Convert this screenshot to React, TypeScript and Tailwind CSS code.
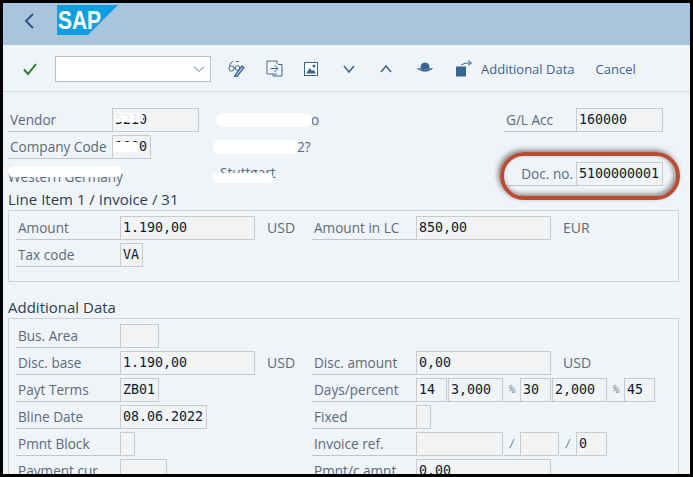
import type { ReactNode } from "react";

const SANS = "font-['Open_Sans','Noto_Sans',sans-serif]";

// SAP style form: label with underline + boxed field
function Label({ w, children, right }: { w: string; children?: ReactNode; right?: boolean }) {
  return (
    <div className={`${w} h-6 shrink-0 border-b border-[#bfc5cb] text-[13.6px] leading-[23px] text-[#5c6b7a] whitespace-nowrap overflow-hidden ${right ? "text-right pr-[3px]" : "pl-[2px]"}`}>
      {children}
    </div>
  );
}

function Unit({ children }: { children: ReactNode }) {
  return (
    <div className="ml-[1px] h-6 w-4 shrink-0 border-b border-[#bfc5cb] text-center font-['DejaVu_Sans_Mono',monospace] text-[11px] leading-[23px] text-[#6f8296]">
      {children}
    </div>
  );
}

function Field({ w, children }: { w: string; children?: ReactNode }) {
  return (
    <div className={`${w} relative h-6 shrink-0 border border-[#c9cccf] bg-[#f2f3f4] pl-[2px] font-['DejaVu_Sans_Mono',monospace] text-[13.3px] leading-[22px] text-[#10202f] whitespace-nowrap overflow-hidden`}>
      {children}
    </div>
  );
}

function Row({ children, className = "" }: { children: ReactNode; className?: string }) {
  return <div className={`flex h-[27px] items-start ${className}`}>{children}</div>;
}

// left half of a two column form row
function Left({ children }: { children: ReactNode }) {
  return <div className="flex w-[296px] shrink-0 items-start">{children}</div>;
}

function Plain({ className = "", children }: { className?: string; children: ReactNode }) {
  return <span className={`text-[14px] leading-6 text-[#5c6b7a] whitespace-nowrap ${className}`}>{children}</span>;
}

// greyed address text, painted over with white in the original
function Blotted({ className = "", bar, children }: { className?: string; bar: string; children?: ReactNode }) {
  return (
    <span className={`relative block h-6 whitespace-nowrap text-[13.6px] leading-6 text-[#5c6b7a] ${className}`}>
      {children}
      <span className={`absolute rounded-full bg-white blur-[0.6px] ${bar}`} />
    </span>
  );
}

function SapLogo() {
  return (
    <svg width="61" height="30" viewBox="0 0 61 30" className="block">
      <polygon points="0,0 61,0 31,30 0,30" fill="#0f9fe0" />
      <text x="1" y="23.5" fontFamily="Liberation Sans" fontWeight="700" fontSize="25" fill="#fff" textLength="43" lengthAdjust="spacingAndGlyphs">SAP</text>
    </svg>
  );
}

function Toolbar() {
  const stroke = "#3a6593";
  return (
    <div className="flex h-[47px] items-center border-b border-[#cfe0ee] pt-[1px]">
      <svg width="16" height="16" viewBox="0 0 16 16" className="ml-[19px] shrink-0">
        <path d="M2 8.5 L6 13 L14 3" fill="none" stroke="#2d7d32" strokeWidth="2" />
      </svg>
      <div className="ml-[17px] flex h-[26px] w-[156px] shrink-0 items-center justify-end border border-[#bcbfc2] bg-white pr-[5px]">
        <svg width="12" height="8" viewBox="0 0 12 8"><path d="M1 1.5 L6 6.5 L11 1.5" fill="none" stroke="#5a7896" strokeWidth="1" /></svg>
      </div>
      <svg width="17" height="17" viewBox="0 0 17 17" className="ml-[17px] shrink-0" fill="none" stroke={stroke} strokeWidth="1">
        <circle cx="3.5" cy="8.5" r="2.6" />
        <circle cx="9.5" cy="8" r="2.3" />
        <path d="M1.5 6 Q2 2 5 1.5 M6 8 L7.2 8 M8 1.5 L11 1.5" />
        <path d="M7 15.5 L14 6 L16 7.5 L9 16.5 L6.5 16.5 Z" fill="#cfe0ee" strokeWidth="1.3" />
      </svg>
      <svg width="17" height="17" viewBox="0 0 17 17" className="ml-[21px] shrink-0" fill="none" stroke={stroke} strokeWidth="1">
        <path d="M11 4 V1 H1 V14 H11" stroke="#56649c" />
        <path d="M12 4.5 H16 V16 H7 V14.5" />
        <path d="M4.5 8.5 H11.5 M8.5 5 L12 8.5 L8.5 12" />
      </svg>
      <svg width="14" height="14" viewBox="0 0 14 14" className="ml-[21px] shrink-0">
        <rect x="0.5" y="0.5" width="13" height="13" fill="#fff" stroke={stroke} />
        <path d="M2 11.5 L6 6 L8 9 L9.5 7.5 L12 11.5 Z" fill={stroke} />
        <circle cx="10" cy="4" r="1.5" fill={stroke} />
      </svg>
      <svg width="12" height="8" viewBox="0 0 12 8" className="ml-[25px] shrink-0">
        <path d="M1 1 L6 7 L11 1" fill="none" stroke={stroke} strokeWidth="1.6" />
      </svg>
      <svg width="12" height="8" viewBox="0 0 12 8" className="ml-[25px] shrink-0">
        <path d="M1 7 L6 1 L11 7" fill="none" stroke={stroke} strokeWidth="1.6" />
      </svg>
      <svg width="16" height="11" viewBox="0 0 16 11" className="ml-[25px] shrink-0 -translate-y-[1px]">
        <path d="M3.5 7 Q3 0.5 8 0.5 Q13 0.5 12.5 7 Z" fill={stroke} />
        <path d="M0.5 6.5 Q8 12 15.5 6.5 Q8 9 0.5 6.5 Z" fill={stroke} stroke={stroke} strokeWidth="0.8" />
      </svg>
      <svg width="16" height="17" viewBox="0 0 16 17" className="ml-[23px] shrink-0">
        <rect x="0" y="6.5" width="10" height="10" fill={stroke} />
        <path d="M5 5 Q8 2.5 15 3 M12 0.5 L15.5 3 L12 5.5" fill="none" stroke={stroke} strokeWidth="1" />
      </svg>
      <span className={`ml-[9px] translate-y-[1px] text-[13px] text-[#42628a] whitespace-nowrap ${SANS}`}>Additional Data</span>
      <span className={`ml-[21px] translate-y-[1px] text-[13px] text-[#42628a] whitespace-nowrap ${SANS}`}>Cancel</span>
    </div>
  );
}

export default function App() {
  return (
    <div className={`h-[477px] w-[693px] overflow-hidden bg-black p-[3px] ${SANS}`}>
      <div className="h-full overflow-hidden bg-[#eff4f9]">
        <div className="flex h-[42px] items-start bg-[#a9c5de] pl-[20px]">
          <svg width="12" height="16" viewBox="0 0 12 16" className="mt-[10px] shrink-0">
            <path d="M10 1 L3 8 L10 15" fill="none" stroke="#2f5680" strokeWidth="2" />
          </svg>
          <div className="ml-[22px] mt-[2px]"><SapLogo /></div>
        </div>
        <Toolbar />

        <div className="relative pl-[5px] pr-[11px] pt-[16px]">
          <Row>
            <Label w="w-[104px]">Vendor</Label>
            <Field w="w-[87px]">
              5210
              <span className="absolute left-[2px] top-[4px] h-[9px] w-[28px] rounded-sm bg-white/90 blur-[0.5px]" />
            </Field>
            <Blotted className="ml-[17px] w-[100px] pl-[95px]" bar="left-0 top-[5px] h-[14px] w-[96px]">o</Blotted>
            <div className="ml-auto flex">
              <Label w="w-[72px]">G/L Acc</Label>
              <Field w="w-[87px]">160000</Field>
            </div>
            <div className="w-[16px] shrink-0" />
          </Row>
          <Row>
            <Label w="w-[104px]">Company Code</Label>
            <Field w="w-[39px]">
              1000
              <span className="absolute left-0 top-[6px] h-[10px] w-[26px] rounded-sm bg-white blur-[0.5px]" />
            </Field>
            <Blotted className="ml-[62px] w-[91px] pl-[84px]" bar="left-0 top-[5px] h-[14px] w-[86px]">2?</Blotted>
          </Row>
          <Row>
            <Blotted className="mt-[3px] w-[113px]" bar="left-0 top-[1px] h-[11px] w-[113px]">Western Germany</Blotted>
            <Blotted className="-mt-[1px] ml-[92px] w-[62px] pl-[7px]" bar="left-0 top-[12px] h-[10px] w-[60px]">Stuttgart</Blotted>
            <div className="ml-auto flex">
              <Label w="w-[72px]" right>Doc. no.</Label>
              <Field w="w-[87px]">5100000001</Field>
            </div>
            <div className="w-[16px] shrink-0" />
          </Row>
          {/* red annotation ring */}
          <div className="absolute right-[10px] top-[60px] h-[48px] w-[180px] rounded-full border-[4px] border-[#b94c33] shadow-[-2px_-2px_5px_#858585,inset_-2px_-2px_5px_#858585]" />

          <h2 className="text-[15px] leading-[21px] text-[#2c3e50]">Line Item 1 / Invoice / 31</h2>
          <div className="h-[72px] border border-[#cdd2d6] pl-[7px] pt-[5px]">
            <Row>
              <Left>
                <Label w="w-[104px]">Amount</Label>
                <Field w="w-[135px]">1.190,00</Field>
                <Plain className="ml-[12px]">USD</Plain>
              </Left>
              <Label w="w-[104px]">Amount in LC</Label>
              <Field w="w-[135px]">850,00</Field>
              <Plain className="ml-[12px]">EUR</Plain>
            </Row>
            <Row>
              <Label w="w-[104px]">Tax code</Label>
              <Field w="w-[23px]"><span className="font-medium">VA</span></Field>
            </Row>
          </div>

          <h2 className="mt-[15px] text-[15px] leading-[21px] text-[#2c3e50]">Additional Data</h2>
          <div className="h-[200px] border border-[#cdd2d6] pl-[7px] pt-[5px]">
            <Row>
              <Label w="w-[104px]">Bus. Area</Label>
              <Field w="w-[39px]" />
            </Row>
            <Row>
              <Left>
                <Label w="w-[104px]">Disc. base</Label>
                <Field w="w-[135px]">1.190,00</Field>
                <Plain className="ml-[12px]">USD</Plain>
              </Left>
              <Label w="w-[104px]">Disc. amount</Label>
              <Field w="w-[135px]">0,00</Field>
              <Plain className="ml-[12px]">USD</Plain>
            </Row>
            <Row>
              <Left>
                <Label w="w-[104px]">Payt Terms</Label>
                <Field w="w-[39px]">ZB01</Field>
              </Left>
              <Label w="w-[104px]">Days/percent</Label>
              <Field w="w-[31px]">14</Field>
              <Field w="ml-[1px] w-[55px]">3,000</Field>
              <Unit>%</Unit>
              <Field w="w-[31px]">30</Field>
              <Field w="ml-[1px] w-[55px]">2,000</Field>
              <Unit>%</Unit>
              <Field w="w-[31px]">45</Field>
            </Row>
            <Row>
              <Left>
                <Label w="w-[104px]">Bline Date</Label>
                <Field w="w-[87px]">08.06.2022</Field>
              </Left>
              <Label w="w-[104px]">Fixed</Label>
              <Field w="w-[15px]" />
            </Row>
            <Row>
              <Left>
                <Label w="w-[104px]">Pmnt Block</Label>
                <Field w="w-[15px]" />
              </Left>
              <Label w="w-[104px]">Invoice ref.</Label>
              <Field w="w-[87px]" />
              <Unit>/</Unit>
              <Field w="w-[39px]" />
              <Unit>/</Unit>
              <Field w="w-[31px]">0</Field>
            </Row>
            <Row>
              <Left>
                <Label w="w-[104px]">Payment cur.</Label>
                <Field w="w-[47px]" />
              </Left>
              <Label w="w-[104px]">Pmnt/c amnt</Label>
              <Field w="w-[135px]">0,00</Field>
            </Row>
          </div>
        </div>
      </div>
    </div>
  );
}
